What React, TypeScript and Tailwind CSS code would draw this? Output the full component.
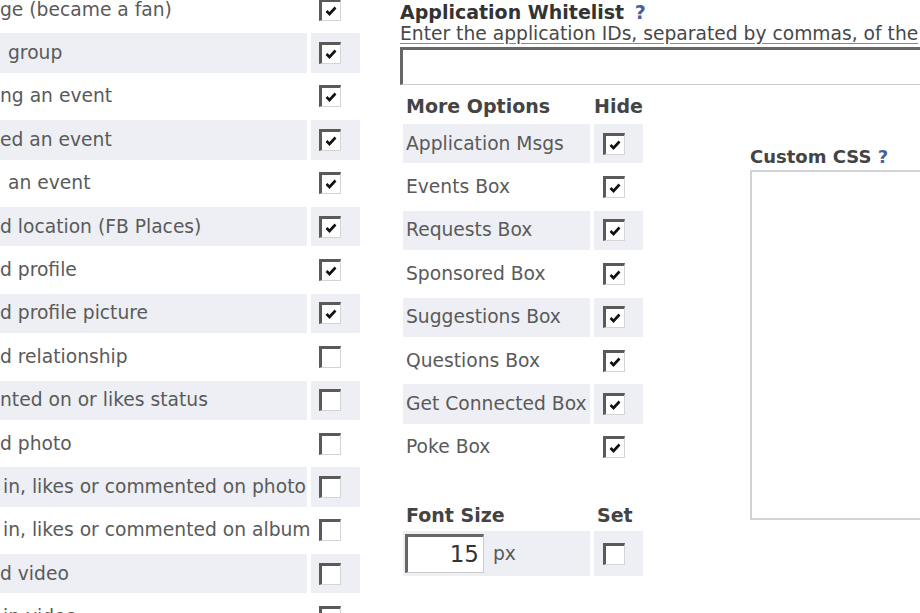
import React from 'react';

const leftRows = [
  { text: 'ge (became a fan)', indent: 'pl-0', checked: true },
  { text: 'group', indent: 'pl-[8px]', checked: true },
  { text: 'ng an event', indent: 'pl-0', checked: true },
  { text: 'ed an event', indent: 'pl-0', checked: true },
  { text: 'an event', indent: 'pl-[8px]', checked: true },
  { text: 'd location (FB Places)', indent: 'pl-0', checked: true },
  { text: 'd profile', indent: 'pl-0', checked: true },
  { text: 'd profile picture', indent: 'pl-0', checked: true },
  { text: 'd relationship', indent: 'pl-0', checked: false },
  { text: 'nted on or likes status', indent: 'pl-0', checked: false },
  { text: 'd photo', indent: 'pl-0', checked: false },
  { text: 'in, likes or commented on photo', indent: 'pl-[3px]', checked: false },
  { text: 'in, likes or commented on album', indent: 'pl-[3px]', checked: false },
  { text: 'd video', indent: 'pl-0', checked: false },
  { text: 'in video', indent: 'pl-[3px]', checked: false },
];

const moreOptions = [
  'Application Msgs',
  'Events Box',
  'Requests Box',
  'Sponsored Box',
  'Suggestions Box',
  'Questions Box',
  'Get Connected Box',
  'Poke Box',
];

function Checkbox({ checked }: { checked: boolean }) {
  return (
    <span className="flex h-[22px] w-[22px] items-center justify-center border-t-[3px] border-l-[3px] border-r border-b border-t-[#5a5a5a] border-l-[#5a5a5a] border-r-[#d4d4d4] border-b-[#d4d4d4] bg-white">
      {checked && (
        <svg width="12" height="10" viewBox="0 0 12 10">
          <path d="M1.5 5 L4.5 8 L10.5 1.5" fill="none" stroke="#111" strokeWidth="2.6" />
        </svg>
      )}
    </span>
  );
}

export default function App() {
  return (
    <div className="relative flex h-[613px] w-[920px] overflow-hidden bg-white font-['DejaVu_Sans',sans-serif] text-[18.7px] text-[#5a5a5a]">
      {/* left column: activity filters */}
      <div className="-mt-[10px] flex w-[360px] shrink-0 flex-col gap-[4px]">
        {leftRows.map((row, i) => (
          <div key={i} className="flex h-[39.4px] shrink-0 gap-[4px]">
            <div className={`flex w-[307px] items-center whitespace-nowrap ${row.indent} ${i % 2 === 1 ? 'bg-[#edeff4]' : ''}`}>
              {row.text}
            </div>
            <div className={`flex w-[49px] items-center pl-[8px] ${i % 2 === 1 ? 'bg-[#edeff4]' : ''}`}>
              <Checkbox checked={row.checked} />
            </div>
          </div>
        ))}
      </div>

      {/* right column */}
      <div className="ml-[40px] flex w-[600px] shrink-0 flex-col">
        <div className="whitespace-nowrap text-[19px] font-bold leading-[24px] text-[#333]">
          Application Whitelist <span className="ml-[4px] text-[#45619d]">?</span>
        </div>
        <div className="whitespace-nowrap leading-[20px] text-[#484848] underline decoration-[#888] underline-offset-[3px]">
          Enter the application IDs, separated by commas, of the
        </div>
        <div className="mt-[3px] h-[38px] w-[600px] border-t-[3px] border-l-[3px] border-r border-b border-t-[#666] border-l-[#666] border-r-[#ccc] border-b-[#ccc] bg-white" />

        <div className="mt-[10px] flex">
          {/* more options table */}
          <div className="ml-[3px] flex w-[240px] shrink-0 flex-col">
            <div className="flex text-[19px] font-bold leading-[22px] text-[#444]">
              <div className="w-[191px] pl-[3px]">More Options</div>
              <div className="pl-[3px]">Hide</div>
            </div>
            <div className="mt-[7px] flex flex-col gap-[4px]">
              {moreOptions.map((label, i) => (
                <div key={label} className="flex h-[39.4px] gap-[4px]">
                  <div className={`flex w-[187px] items-center whitespace-nowrap pl-[3px] ${i % 2 === 0 ? 'bg-[#edeff4]' : ''}`}>
                    {label}
                  </div>
                  <div className={`flex w-[49px] items-center pl-[9px] ${i % 2 === 0 ? 'bg-[#edeff4]' : ''}`}>
                    <Checkbox checked />
                  </div>
                </div>
              ))}
            </div>

            <div className="mt-[37px] flex text-[19px] font-bold leading-[22px] text-[#444]">
              <div className="w-[191px] pl-[3px]">Font Size</div>
              <div className="pl-[3px]">Set</div>
            </div>
            <div className="mt-[5px] flex h-[45px] gap-[4px]">
              <div className="flex w-[187px] items-center bg-[#edeff4] pl-[2px]">
                <div className="flex h-[39px] w-[79px] items-center justify-end border-t-[3px] border-l-[3px] border-r border-b border-t-[#666] border-l-[#666] border-r-[#ccc] border-b-[#ccc] bg-white pr-[4px] text-[23px] text-[#333]">
                  15
                </div>
                <span className="ml-[9px]">px</span>
              </div>
              <div className="flex w-[49px] items-center bg-[#edeff4] pl-[9px]">
                <Checkbox checked={false} />
              </div>
            </div>
          </div>

          {/* custom css */}
          <div className="ml-[107px] mt-[51px] flex flex-col">
            <div className="whitespace-nowrap text-[18px] font-bold leading-[22px] text-[#444]">
              Custom CSS <span className="text-[#45619d]">?</span>
            </div>
            <div className="mt-[2px] h-[350px] w-[300px] border-2 border-[#cfd2d6] bg-white" />
          </div>
        </div>
      </div>
    </div>
  );
}
